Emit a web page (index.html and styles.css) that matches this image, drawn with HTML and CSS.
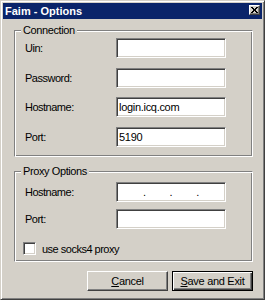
FILE: index.html
```html
<!DOCTYPE html>
<html lang="en">
<head>
  <meta charset="UTF-8">
  <title>Faim - Options</title>
  <link rel="stylesheet" href="styles.css">
</head>
<body>

  <div class="window">
    <div class="titlebar">
      <span class="title">Faim - Options</span>
      <span class="close-btn">
        <svg width="7" height="6" viewBox="0 0 7 6">
          <path d="M0 0h2v1h-2zM5 0h2v1h-2zM1 1h2v1h-2zM4 1h2v1h-2zM2 2h3v2h-3zM1 4h2v1h-2zM4 4h2v1h-2zM0 5h2v1h-2zM5 5h2v1h-2z" fill="#000"/>
        </svg>
      </span>
    </div>

    <div class="client">
      <!-- Connection settings -->
      <div class="group group-connection">
        <span class="group-label">Connection</span>
        <div class="row">
          <label for="uin">Uin:</label>
          <input type="text" id="uin" class="field">
        </div>
        <div class="row">
          <label for="password">Password:</label>
          <input type="text" id="password" class="field">
        </div>
        <div class="row">
          <label for="hostname">Hostname:</label>
          <input type="text" id="hostname" class="field" value="login.icq.com">
        </div>
        <div class="row">
          <label for="port">Port:</label>
          <input type="text" id="port" class="field" value="5190">
        </div>
      </div>

      <!-- Proxy settings -->
      <div class="group group-proxy">
        <span class="group-label">Proxy Options</span>
        <div class="row">
          <label>Hostname:</label>
          <div class="field ip-field">
            <span>.</span><span>.</span><span>.</span>
          </div>
        </div>
        <div class="row">
          <label for="proxyPort">Port:</label>
          <input type="text" id="proxyPort" class="field">
        </div>
        <div class="check-row">
          <span class="checkbox"></span>
          <span>use socks4 proxy</span>
        </div>
      </div>

      <div class="buttons">
        <button class="btn"><u>C</u>ancel</button>
        <button class="btn btn-default"><u>S</u>ave and Exit</button>
      </div>
    </div>
  </div>

</body>
</html>
```

FILE: styles.css
```css
* {
  box-sizing: border-box;
  margin: 0;
  padding: 0;
}

body {
  font-family: 'Liberation Sans', Arial, sans-serif;
  font-size: 11px;
  color: #000;
  background-color: #d4d0c8;
}

/* Outer window frame */
.window {
  width: 265px;
  height: 300px;
  background-color: #d4d0c8;
  border: 1px solid;
  border-color: #d4d0c8 #404040 #404040 #d4d0c8;
  box-shadow: inset 1px 1px #fff, inset -1px -1px #808080;
  padding: 2px;
}

.titlebar {
  height: 16px;
  background-color: #0a246a;
  display: flex;
  align-items: center;
  justify-content: space-between;
  padding: 0 2px 0 2px;
}

.title {
  color: #fff;
  font-weight: 700;
  line-height: 16px;
}

.close-btn {
  width: 11px;
  height: 10px;
  background-color: #d4d0c8;
  border: 1px solid;
  border-color: #fff #404040 #404040 #fff;
  box-shadow: inset -1px -1px #808080;
  display: flex;
  align-items: center;
  justify-content: center;
  margin-top: -2px;
}

.close-btn svg {
  display: block;
}

.client {
  padding: 11px 9px 0 11px;
}

/* Etched group box */
.group {
  position: relative;
  border: 1px solid;
  border-color: #808080 #fff #fff #808080;
  box-shadow: inset 1px 1px #fff, inset -1px -1px #808080;
  padding-left: 10px;
  display: flex;
  flex-direction: column;
}

.group-label {
  position: absolute;
  top: -7px;
  left: 6px;
  padding: 0 2px;
  background-color: #d4d0c8;
  line-height: 13px;
  letter-spacing: -0.4px;
}

.group-connection {
  height: 127px;
  padding-top: 7px;
  gap: 9.5px;
}

.group-proxy {
  height: 91px;
  margin-top: 14px;
  padding-top: 10px;
  gap: 7px;
}

.row {
  display: flex;
  align-items: center;
}

.row label {
  width: 91px;
  letter-spacing: -0.5px;
}

/* Sunken edit box */
.field {
  width: 110px;
  height: 20px;
  background-color: #fff;
  border: 1px solid;
  border-color: #808080 #fff #fff #808080;
  box-shadow: inset 1px 1px #404040, inset -1px -1px #d4d0c8;
  padding: 0 2px;
  font-family: inherit;
  font-size: 11px;
  letter-spacing: -0.3px;
  color: #000;
  outline: none;
}

.ip-field {
  display: flex;
  align-items: flex-end;
  justify-content: space-evenly;
  padding-bottom: 3px;
  line-height: 11px;
}

.check-row {
  display: flex;
  align-items: center;
  gap: 6px;
  margin-top: 6px;
  margin-left: -2px;
  letter-spacing: -0.5px;
}

.checkbox {
  width: 13px;
  height: 13px;
  background-color: #fff;
  border: 1px solid;
  border-color: #808080 #fff #fff #808080;
  box-shadow: inset 1px 1px #404040, inset -1px -1px #d4d0c8;
}

.buttons {
  display: flex;
  justify-content: flex-end;
  gap: 4px;
  margin-top: 9px;
}

/* Raised push button */
.btn {
  width: 81px;
  height: 20px;
  font-family: inherit;
  font-size: 11px;
  letter-spacing: -0.3px;
  color: #000;
  background-color: #d4d0c8;
  border: 1px solid;
  border-color: #fff #404040 #404040 #fff;
  box-shadow: inset -1px -1px #808080;
}

.btn-default {
  border-color: #000;
  box-shadow: inset 1px 1px #fff, inset -1px -1px #404040, inset -2px -2px #808080;
}
```
